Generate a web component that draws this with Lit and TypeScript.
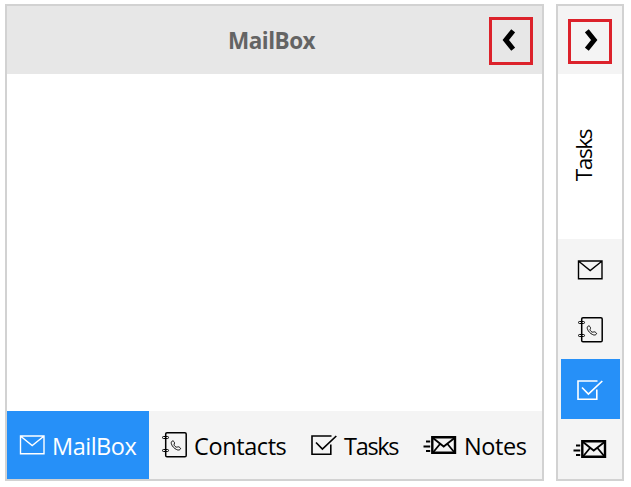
import { LitElement, html, svg, css } from "lit";
import { customElement, property } from "lit/decorators.js";

type IconName = "mail" | "contacts" | "tasks" | "notes" | "left" | "right";

const shapes = {
  mail: svg`<path d="M1.5 1H25V18.7H1.5ZM2 1.5L13.2 10.5L24.5 1.5" stroke-width="1.4"/>`,
  contacts: svg`
    <rect x="3.7" y="0.8" width="20.5" height="24" rx="1.3" stroke-width="1.5"/>
    <rect x="0.5" y="4.5" width="6" height="2" rx="0.9" stroke-width="1"/>
    <rect x="0.5" y="17.5" width="6" height="2" rx="0.9" stroke-width="1"/>
    <path d="M9.8 9.4C10.8 8.4 12 9.1 12.5 10.7C12.8 11.9 11.9 12.2 12 12.8C12.4 13.9 13.5 15 14.7 15.2C15.3 15.3 15.8 14.5 16.7 14.9C18.5 15.7 19 16.4 18.2 17.3C17.4 18.2 15.8 18.2 14.5 17.5C12.2 16.4 10.2 14.3 9.5 12.2C9.1 11.1 9.1 10.1 9.8 9.4Z" stroke-width="0.95"/>`,
  tasks: svg`<path d="M20.5 1H1V19.2H19.8V9.5" stroke-width="1.6"/><path d="M5 7.5L11.4 14L25.3 1" stroke-width="1.7"/>`,
  notes: svg`
    <path d="M9.3 1.2H32V16.8H9.3Z" stroke-width="2.4"/>
    <path d="M10 2L20.7 10.5L31.5 2M10 16.5L17 8M31.5 16.5L24.5 8" stroke-width="1.8"/>
    <path d="M3 5.5H7.2M0.5 10.5H7.2M3 15H7.2" stroke-width="2"/>`,
  left: svg`<path d="M11.2 1.8L3.8 11L11.2 20.2" stroke-width="5"/>`,
  right: svg`<path d="M1.8 1.8L9.2 11L1.8 20.2" stroke-width="5"/>`,
};

const sizes: Record<IconName, [number, number]> = {
  mail: [26, 20],
  contacts: [25, 26],
  tasks: [26, 20],
  notes: [34, 18],
  left: [13, 22],
  right: [13, 22],
};

@customElement("nav-icon")
export class NavIcon extends LitElement {
  @property() name: IconName = "mail";
  static styles = css`
    :host { display: block; flex: none; }
    svg { display: block; fill: none; stroke: currentColor; }
  `;
  render() {
    const [w, h] = sizes[this.name];
    return html`<svg width=${w} height=${h} viewBox="0 0 ${w} ${h}">${shapes[this.name]}</svg>`;
  }
}

@customElement("app-root")
export class AppRoot extends LitElement {
  static styles = css`
    :host {
      display: flex;
      gap: 12px;
      box-sizing: border-box;
      width: 631px;
      height: 487px;
      padding: 4px 0 6px 5px;
      background: #fff;
      color: #000;
      font-family: "Open Sans", "Noto Sans", sans-serif;
      overflow: hidden;
    }
    .panel {
      display: flex;
      flex-direction: column;
      box-sizing: border-box;
      height: 477px;
      border: 2px solid #d2d2d2;
    }
    .wide { width: 539px; }
    .slim { width: 68px; }
    .header {
      display: grid;
      grid-template-columns: 482px 44px;
      height: 68px;
      flex: none;
      background: #e7e7e7;
    }
    .title {
      padding: 19px 0 0 221px;
      font-size: 22.5px;
      line-height: 32px;
      font-weight: 700;
      letter-spacing: -0.5px;
      color: #646464;
    }
    .toggle {
      display: flex;
      box-sizing: border-box;
      width: 44px;
      height: 48px;
      margin-top: 11px;
      padding: 9px 0 0 10px;
      border: 3px solid #dc222b;
    }
    .slim .header {
      display: block;
      background: #f4f4f4;
      padding-left: 10px;
      box-sizing: border-box;
      overflow: hidden;
    }
    .slim .toggle { height: 45px; margin-top: 13px; padding: 7px 0 0 14px; }
    .body { flex: 1; }
    .vertical {
      height: 165px;
      flex: none;
      display: flex;
      align-items: center;
      justify-content: center;
    }
    .vertical span {
      writing-mode: vertical-rl;
      transform: rotate(180deg);
      font-size: 22.5px;
      line-height: 30px;
      letter-spacing: -1.4px;
      margin: 0 12px 2px 0;
    }
    .bar {
      display: grid;
      grid-template-columns: 142px 150px 112px 131px;
      height: 68px;
      flex: none;
      background: #f4f4f4;
    }
    .tab {
      display: flex;
      align-items: center;
      gap: 7px;
      padding-left: 12px;
      font-size: 23.5px;
      white-space: nowrap;
    }
    .tab span { line-height: 34px; padding-top: 2px; }
    .tab nav-icon[name="contacts"] { margin: 0 0 1px 1px; }
    .tab nav-icon[name="notes"] { margin: 0 0 1px 0; }
    .on { background: #2690f8; color: #fff; }
    .rail {
      flex: 1;
      display: grid;
      grid-template-rows: repeat(4, 60px);
      justify-content: center;
      grid-template-columns: 59px;
      background: #f4f4f4;
    }
    .cell { display: flex; align-items: center; justify-content: center; padding-top: 2px; box-sizing: border-box; }
    .cell:nth-child(2) { padding-top: 1px; }
    .cell:last-child { padding-top: 0; height: 59px; }
    .mailbox { letter-spacing: -0.5px; }
    .contacts { letter-spacing: -0.4px; }
    .tasks { letter-spacing: -1.3px; }
    .notes { letter-spacing: -0.4px; }
  `;

  private tabs: { icon: IconName; label: string }[] = [
    { icon: "mail", label: "MailBox" },
    { icon: "contacts", label: "Contacts" },
    { icon: "tasks", label: "Tasks" },
    { icon: "notes", label: "Notes" },
  ];

  render() {
    return html`
      <div class="panel wide">
        <div class="header">
          <div class="title">MailBox</div>
          <div class="toggle"><nav-icon name="left"></nav-icon></div>
        </div>
        <div class="body"></div>
        <div class="bar">
          ${this.tabs.map((t, i) => html`
            <div class="tab ${i === 0 ? "on" : ""}">
              <nav-icon name=${t.icon}></nav-icon>
              <span class=${t.label.toLowerCase()}>${t.label}</span>
            </div>`)}
        </div>
      </div>
      <div class="panel slim">
        <div class="header">
          <div class="toggle"><nav-icon name="right"></nav-icon></div>
        </div>
        <div class="vertical"><span>Tasks</span></div>
        <div class="rail">
          ${this.tabs.map((t, i) => html`
            <div class="cell ${i === 2 ? "on" : ""}">
              <nav-icon name=${t.icon}></nav-icon>
            </div>`)}
        </div>
      </div>
    `;
  }
}
